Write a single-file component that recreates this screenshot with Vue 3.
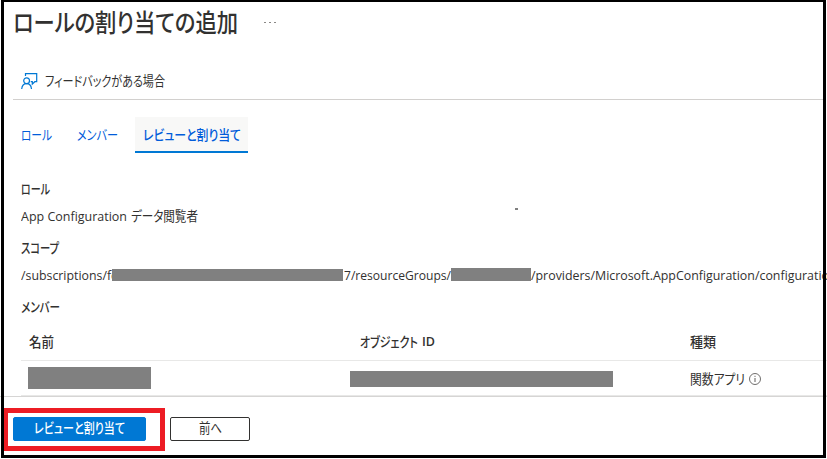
<script setup>
// Condenses a label horizontally to the given pixel width.
const vFit = {
  mounted(el, { value }) {
    const inner = el.firstElementChild
    const natural = inner.getBoundingClientRect().width
    el.style.width = `${value}px`
    inner.style.transform = `scaleX(${value / natural})`
  },
}
</script>

<template>
  <div class="screen">
    <header class="title-bar">
      <h1 v-fit="225" class="fit"><span>ロールの割り当ての追加</span></h1>
      <span class="more"><i></i><i></i><i></i></span>
    </header>

    <div class="toolbar">
      <svg class="feedback" width="17" height="17" viewBox="0 0 17 17" fill="none" stroke="#0078d4" stroke-width="1.2">
        <path d="M4.5 3V.6h11.2v8.1h-1.9l-2.5 2.4V8.7h-1.6" />
        <circle cx="5.6" cy="7.7" r="2.9" />
        <path d="M.7 16c.3-3.2 2.1-5.3 4.9-5.3s4.6 2.1 4.9 5.3" />
      </svg>
      <span v-fit="120" class="fit"><span>フィードバックがある場合</span></span>
    </div>

    <nav class="tabs">
      <a class="tab"><span v-fit="31" class="fit"><span>ロール</span></span></a>
      <a class="tab"><span v-fit="41" class="fit"><span>メンバー</span></span></a>
      <a class="tab active"><span v-fit="98" class="fit"><span>レビューと割り当て</span></span></a>
    </nav>

    <main class="content">
      <h2 class="role-head"><span v-fit="29" class="fit"><span>ロール</span></span></h2>
      <p class="role">
        <span v-fit="106" class="fit latin"><span>App Configuration</span></span>
        <span v-fit="67" class="fit"><span>データ閲覧者</span></span>
      </p>
      <h2 class="scope-head"><span v-fit="38" class="fit"><span>スコープ</span></span></h2>
      <p class="scope">
        <span v-fit="96" class="fit latin first"><span>/subscriptions/fc</span></span>
        <span class="mask id"></span>
        <span v-fit="107" class="fit latin"><span>7/resourceGroups/</span></span>
        <span class="mask group"></span>
        <span v-fit="298" class="fit latin"><span>/providers/Microsoft.AppConfiguration/configuratio</span></span>
      </p>
      <h2 class="member-head"><span v-fit="39" class="fit"><span>メンバー</span></span></h2>

      <div class="grid head">
        <span><span v-fit="25" class="fit"><span>名前</span></span></span>
        <span class="object"><span v-fit="58" class="fit"><span>オブジェクト</span></span><span v-fit="13" class="fit latin"><span>ID</span></span></span>
        <span><span v-fit="26" class="fit"><span>種類</span></span></span>
      </div>
      <div class="grid row">
        <span class="mask name"></span>
        <span class="mask oid"></span>
        <span class="kind">
          <span v-fit="55" class="fit"><span>関数アプリ</span></span>
          <svg width="12" height="12" viewBox="0 0 12 12" fill="none" stroke="#605e5c">
            <circle cx="6" cy="6" r="5.5" stroke-width=".9" />
            <path d="M6 5v4M6 2.8v1.1" stroke-width="1" />
          </svg>
        </span>
      </div>
    </main>

    <footer class="actions">
      <button class="primary"><span v-fit="91" class="fit"><span>レビューと割り当て</span></span></button>
      <button><span v-fit="23" class="fit"><span>前へ</span></span></button>
    </footer>

    <span class="speck"></span>
    <div class="highlight"></div>
    <div class="frame"></div>
  </div>
</template>

<style>
body { margin: 0; background: #fff; }
</style>

<style scoped>
.screen {
  position: relative;
  display: flex;
  flex-direction: column;
  width: 827px;
  height: 459px;
  overflow: hidden;
  box-sizing: border-box;
  background: #fff;
  color: #323130;
  font: 13.6px/18px "Noto Sans CJK JP", sans-serif;
  font-feature-settings: "palt";
}
h1, h2, p { margin: 0; font-size: inherit; font-weight: 500; }
p { font-weight: 400; }
.fit { display: block; flex: none; height: 20px; white-space: nowrap; }
.fit > span { display: inline-block; transform-origin: 0 50%; }
.latin { font-family: "Open Sans", "Noto Sans", sans-serif; font-size: 13px; line-height: 20px; }

.title-bar { display: flex; height: 62px; padding-left: 13px; box-sizing: border-box; }
h1 { font-size: 24.5px; line-height: 32px; padding-top: 6px; }
.more { display: flex; gap: 3px; margin: 22px 0 0 26px; }
.more i { width: 2px; height: 1px; background: #8a8886; }

.toolbar {
  display: flex;
  align-items: center;
  gap: 7px;
  height: 38px;
  box-sizing: border-box;
  margin: 0 4px 0 13px;
  padding-left: 8px;
  border-bottom: 1px solid #d2d0ce;
}
.feedback { margin-top: 1px; }

.tabs { display: flex; height: 36px; padding: 17px 0 0 13px; }
.tab { display: flex; box-sizing: border-box; padding: 8px 8px 0; margin-right: 9px; color: #015cda; }
.active { width: 113px; background: #f8f8f7; border-bottom: 2px solid #0078d4; font-weight: 500; }

.content { padding: 26px 0 0 21px; }
.role-head { height: 27px; }
.role { display: flex; gap: 4px; height: 32px; }
.scope-head { height: 27px; }
.scope { display: flex; height: 32px; }
.first { margin-right: -5px; }
.mask { display: block; flex: none; background: #808080; }
.scope .id { z-index: 1; width: 231px; height: 12px; margin: 4px 1px 0 0; }
.scope .group { width: 80px; height: 13px; margin-top: 3px; }
.member-head { height: 26px; }
.grid { display: grid; grid-template-columns: 331px 330px 1fr; padding-left: 8px; border-bottom: 1px solid #e8e8e7; }
.head { height: 38px; box-sizing: border-box; font-weight: 500; padding-top: 9px; }
.object { display: flex; gap: 4px; }
.object .latin { font-weight: 600; line-height: 19px; }
.row { height: 34px; }
.name { width: 123px; height: 22px; margin: 6px 0 0 -1px; }
.oid { width: 263px; height: 16px; margin: 10px 0 0 -10px; }
.kind { display: flex; gap: 4px; align-items: center; height: 36px; }

.actions {
  display: flex;
  gap: 24px;
  flex: 1;
  padding: 20px 0 0 13px;
  border-top: 1px solid #d6d5d4;
}
button {
  display: flex;
  justify-content: center;
  align-items: center;
  width: 80px;
  height: 24px;
  padding: 0;
  border: 1px solid #323130;
  border-radius: 2px;
  background: #fff;
  color: #323130;
  font: inherit;
  font-feature-settings: inherit;
}
.primary { width: 133px; background: #0078d4; border-color: #0078d4; color: #fff; font-weight: 500; }
button .fit { margin-top: -2px; }

.speck { position: absolute; left: 515px; top: 208px; width: 3px; height: 2px; background: #808080; }
.highlight {
  position: absolute;
  left: 4px;
  top: 408px;
  width: 161px;
  height: 43px;
  box-sizing: border-box;
  border: 5px solid #ed1c24;
  border-left-width: 4px;
}
.frame {
  position: absolute;
  z-index: 2;
  left: 1px;
  top: -1px;
  width: 825px;
  height: 459px;
  box-sizing: border-box;
  border: 3px solid #000;
}
</style>
